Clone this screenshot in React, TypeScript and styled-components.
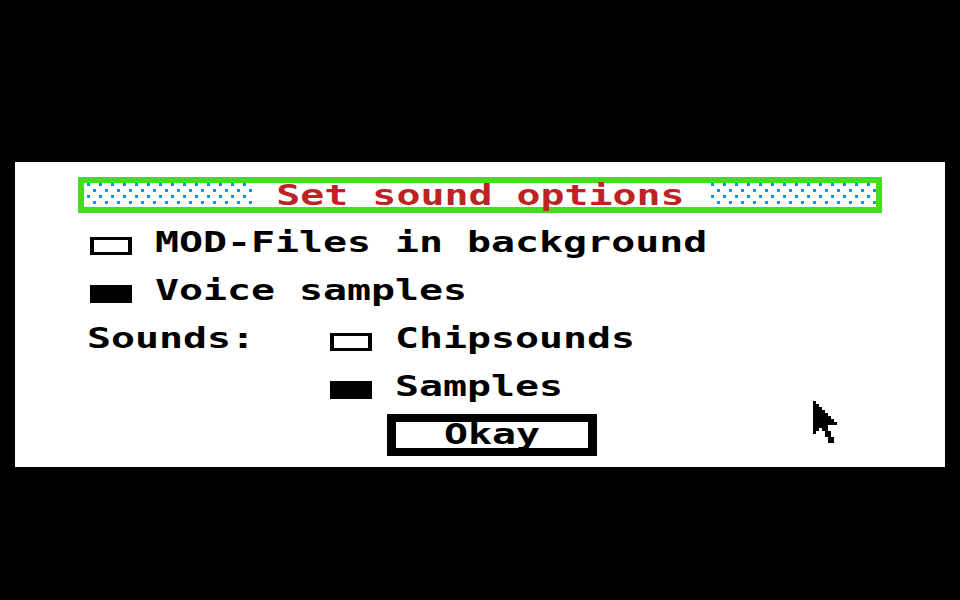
import React from "react";
import styled, { createGlobalStyle } from "styled-components";

const GlobalStyle = createGlobalStyle`
  html, body {
    margin: 0;
    padding: 0;
    background: #000;
  }
  #root {
    width: 960px;
    height: 600px;
  }
`;

// 8x8 system font look: mono glyphs stretched to a 24px cell
const Label = styled.span<{ $color?: string; $center?: boolean }>`
  display: inline-block;
  font: bold 29px/24px "DejaVu Sans Mono", "Liberation Mono", monospace;
  white-space: pre;
  color: ${(p) => p.$color || "#000"};
  transform: scaleX(1.375);
  transform-origin: ${(p) => (p.$center ? "center" : "left")} center;
`;

const Screen = styled.div`
  width: 960px;
  height: 600px;
  background: #000;
  padding: 162px 15px 0;
  box-sizing: border-box;
`;

const Panel = styled.div`
  position: relative;
  width: 930px;
  height: 305px;
  background: #fff;
  padding-top: 15px;
  box-sizing: border-box;
  display: flex;
  flex-direction: column;
`;

const TitleBar = styled.div`
  margin-left: 63px;
  width: 804px;
  height: 36px;
  box-sizing: border-box;
  border: 6px solid #44dd22;
  background: #fff;
  display: flex;
`;

const DotField = styled.svg`
  flex: 1;
  display: block;
  height: 24px;
`;

const TitleCaption = styled.div`
  flex: none;
  width: 456px;
  height: 24px;
  background: #fff;
  display: flex;
  justify-content: center;
`;

const Rows = styled.div`
  margin-top: 17px;
  display: flex;
  flex-direction: column;
  gap: 24px;
`;

const Row = styled.div<{ $indent: number }>`
  display: flex;
  align-items: flex-start;
  height: 24px;
  padding-left: ${(p) => p.$indent}px;
`;

const Checkbox = styled.span<{ $on?: boolean }>`
  flex: none;
  width: 42px;
  height: 18px;
  margin-top: 7px;
  margin-right: 23px;
  box-sizing: border-box;
  border: 3px solid #000;
  border-left-width: 4px;
  border-right-width: 4px;
  background: ${(p) => (p.$on ? "#000" : "#fff")};
`;

const SoundsCaption = styled.div`
  width: 243px;
  flex: none;
`;

const OkButton = styled.button`
  align-self: flex-start;
  margin: 16px 0 0 372px;
  width: 210px;
  height: 42px;
  box-sizing: border-box;
  border: 8px solid #000;
  border-left-width: 9px;
  border-right-width: 9px;
  border-radius: 0;
  background: #fff;
  padding: 0 0 2px;
  display: flex;
  justify-content: center;
  align-items: flex-start;
  cursor: pointer;
`;

const Pointer = styled.svg`
  position: absolute;
  left: 798px;
  top: 239px;
`;

// arrow pointer, one rect per scanline: [row, from, to]
const arrowRows: [number, number, number][] = [
  [0, 0, 1], [1, 0, 2], [2, 0, 3], [3, 0, 4], [4, 0, 5], [5, 0, 6],
  [6, 0, 7], [7, 0, 8], [8, 0, 5], [9, 0, 2], [9, 3, 5], [10, 0, 1],
  [10, 4, 6], [11, 4, 6], [12, 5, 7], [13, 5, 7],
];

// blue checker dither on both sides of the caption
function Dots({ id }: { id: string }) {
  return (
    <DotField shapeRendering="crispEdges">
      <defs>
        <pattern id={id} x="3" y="0" width="12" height="12" patternUnits="userSpaceOnUse">
          <rect x="0" y="0" width="3" height="3" fill="#0a94f0" />
          <rect x="6" y="6" width="3" height="3" fill="#0a94f0" />
        </pattern>
      </defs>
      <rect width="100%" height="100%" fill={`url(#${id})`} />
    </DotField>
  );
}

function Option({ on, text }: { on?: boolean; text: string }) {
  return (
    <>
      <Checkbox $on={on} />
      <Label>{text}</Label>
    </>
  );
}

export default function App() {
  return (
    <Screen>
      <GlobalStyle />
      <Panel>
        <TitleBar>
          <Dots id="dots-left" />
          <TitleCaption>
            <Label $color="#bf2222" $center>
              Set sound options
            </Label>
          </TitleCaption>
          <Dots id="dots-right" />
        </TitleBar>

        <Rows>
          <Row $indent={75}>
            <Option text="MOD-Files in background" />
          </Row>
          <Row $indent={75}>
            <Option on text="Voice samples" />
          </Row>
          <Row $indent={72}>
            <SoundsCaption>
              <Label>Sounds:</Label>
            </SoundsCaption>
            <Option text="Chipsounds" />
          </Row>
          <Row $indent={315}>
            <Option on text="Samples" />
          </Row>
        </Rows>

        <OkButton>
          <Label $center>Okay</Label>
        </OkButton>

        <Pointer width="24" height="42" viewBox="0 0 8 14" shapeRendering="crispEdges">
          {arrowRows.map(([y, x0, x1], i) => (
            <rect key={i} x={x0} y={y} width={x1 - x0} height={1} fill="#000" />
          ))}
        </Pointer>
      </Panel>
    </Screen>
  );
}
